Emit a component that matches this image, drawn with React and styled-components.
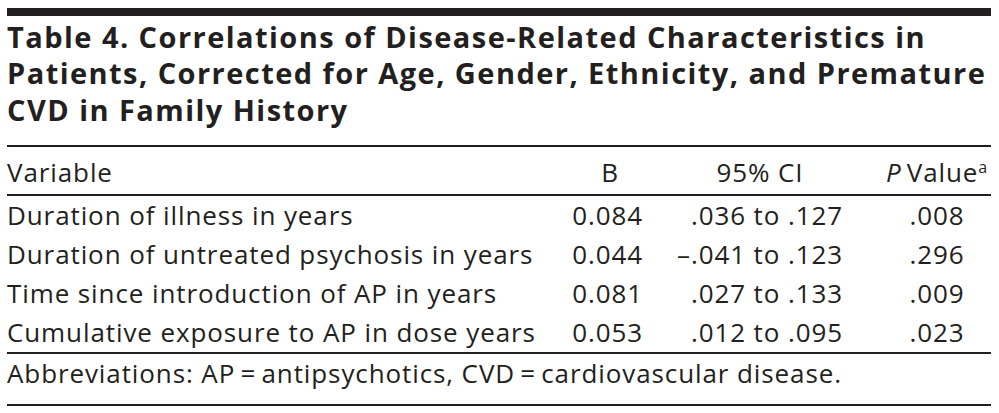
import React from "react";
import styled, { createGlobalStyle } from "styled-components";

const ink = "#231f20";

const GlobalStyle = createGlobalStyle`
  *, *::before, *::after {
    box-sizing: border-box;
  }
  html, body {
    margin: 0;
    padding: 0;
    background: #ffffff;
  }
  body {
    font-family: "Open Sans", "Noto Sans", sans-serif;
    color: ${ink};
  }
`;

const Page = styled.div`
  width: 999px;
  padding: 8px 8px 0 7px;
`;

const TopRule = styled.div`
  height: 8px;
  background: ${ink};
`;

const Title = styled.h1`
  margin: 0;
  padding: 2.5px 0 17px;
  font-size: 29px;
  line-height: 36.5px;
  font-weight: 700;
  letter-spacing: 1.45px;
  white-space: nowrap;
`;

const Grid = styled.div`
  display: grid;
  grid-template-columns: 553px 100px 200px 131px;
  font-size: 26px;
  letter-spacing: 0.9px;
`;

const Row = styled.div`
  display: contents;
`;

const Cell = styled.div`
  height: ${(p) => (p.$head ? 49 : p.$ruled ? 41 : 39)}px;
  padding-top: ${(p) => (p.$head ? 8 : 0)}px;
  line-height: ${(p) => (p.$head ? 35 : 39)}px;
  text-align: ${(p) => p.$align || "left"};
  padding-right: ${(p) => p.$pr || 0}px;
  padding-left: ${(p) => p.$pl || 0}px;
  white-space: nowrap;
  border-top: ${(p) => (p.$ruled ? `2px solid ${ink}` : "none")};
`;

const Italic = styled.i`
  font-style: italic;
`;

const Sup = styled.sup`
  font-size: 16px;
  line-height: 0;
  vertical-align: 9px;
`;

const Footer = styled.div`
  border-top: 2px solid ${ink};
  border-bottom: 2px solid ${ink};
  padding: 3px 0 15px;
  font-size: 26px;
  line-height: 32px;
  letter-spacing: 0.9px;
  white-space: nowrap;
`;

const rows = [
  ["Duration of illness in years", "0.084", ".036 to .127", ".008"],
  ["Duration of untreated psychosis in years", "0.044", "\u2013.041 to .123", ".296"],
  ["Time since introduction of AP in years", "0.081", ".027 to .133", ".009"],
  ["Cumulative exposure to AP in dose years", "0.053", ".012 to .095", ".023"],
];

export default function App() {
  return (
    <>
      <GlobalStyle />
      <Page>
        <TopRule />
        <Title>
          Table 4. Correlations of Disease-Related Characteristics in
          <br />
          Patients, Corrected for Age, Gender, Ethnicity, and Premature
          <br />
          CVD in Family History
        </Title>
        <Grid>
          <Row>
            <Cell $head $ruled>Variable</Cell>
            <Cell $head $ruled $align="center">B</Cell>
            <Cell $head $ruled $align="center">95% CI</Cell>
            <Cell $head $ruled $align="center" $pl={23}>
              <Italic>P</Italic>{"\u2009"}Value<Sup>a</Sup>
            </Cell>
          </Row>
          {rows.map((r, i) => (
            <Row key={r[0]}>
              <Cell $ruled={i === 0}>{r[0]}</Cell>
              <Cell $ruled={i === 0} $align="right" $pr={17}>{r[1]}</Cell>
              <Cell $ruled={i === 0} $align="right" $pr={17}>{r[2]}</Cell>
              <Cell $ruled={i === 0} $align="center" $pl={23}>{r[3]}</Cell>
            </Row>
          ))}
        </Grid>
        <Footer>Abbreviations: AP{"\u2009=\u2009"}antipsychotics, CVD{"\u2009=\u2009"}cardiovascular disease.</Footer>
      </Page>
    </>
  );
}
